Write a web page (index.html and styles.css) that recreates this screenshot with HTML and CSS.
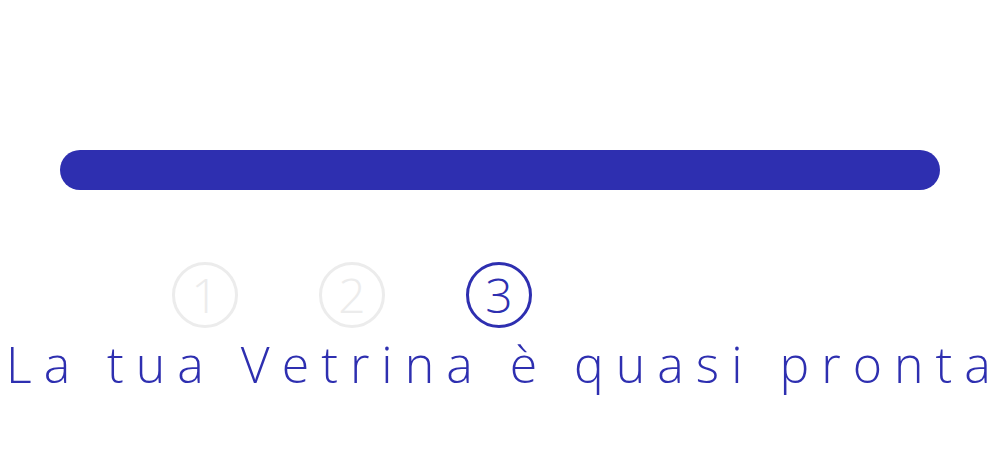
FILE: index.html
```html
<!DOCTYPE html>
<html lang="it">
<head>
<meta charset="utf-8">
<link rel="stylesheet" href="styles.css">
</head>
<body>
<div class="page">
  <div class="bar"></div>
  <div class="steps">
    <div class="step">1</div>
    <div class="step">2</div>
    <div class="step active">3</div>
  </div>
  <h1 class="title">La tua Vetrina è quasi pront<span class="last">a</span></h1>
</div>
</body>
</html>
```
FILE: styles.css
```css
html, body {
  margin: 0;
  padding: 0;
  background: #ffffff;
}
.page {
  width: 1000px;
  height: 450px;
  overflow: hidden;
  display: flex;
  flex-direction: column;
  font-family: "Open Sans", "Liberation Sans", sans-serif;
}
.bar {
  margin: 150px 60px 0;
  height: 40px;
  border-radius: 20px;
  background: #2e2fb0;
}
.steps {
  display: flex;
  gap: 81px;
  margin-top: 72px;
  padding-left: 172px;
}
.step {
  width: 60px;
  height: 60px;
  border: 3px solid #ececec;
  border-radius: 50%;
  display: flex;
  align-items: center;
  justify-content: center;
  font-size: 48px;
  font-weight: 300;
  color: #ececec;
  line-height: 1;
}
.step.active {
  border-color: #2e2fb0;
  color: #2e2fb0;
}
.title {
  margin: 6px 0 0;
  text-align: left;
  white-space: nowrap;
  font-size: 50px;
  font-weight: 300;
  line-height: 60px;
  letter-spacing: 12px;
  color: #2e2fb0;
  padding-left: 6px;
}
.last {
  letter-spacing: 0;
}
```
